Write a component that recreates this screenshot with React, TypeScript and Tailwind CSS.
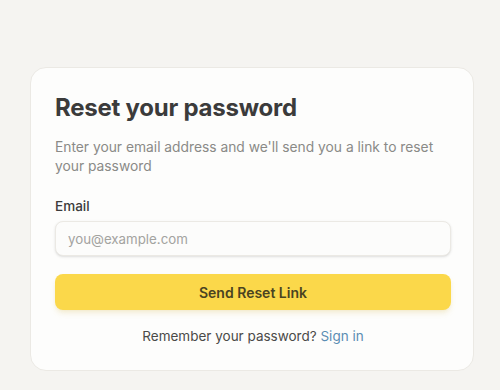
export default function App() {
  return (
    <div className="min-h-screen bg-[#f5f4f1] pl-[30px] pr-[26px] pt-[67px] pb-5 font-['Inter',sans-serif]">
      <div className="rounded-2xl border border-[#ebe9e4] bg-[#fdfdfc] pl-6 pr-[22px] pt-[24px] pb-[24px]">
        <h1 className="text-[24px] font-bold leading-8 tracking-[-0.01em] text-[#3b3b3b]">
          Reset your password
        </h1>
        <p className="mt-[14px] text-[13.8px] leading-[19px] text-[#8a8a87]">
          Enter your email address and we'll send you a link to reset your password
        </p>

        <form className="mt-[20px]" onSubmit={(e) => e.preventDefault()}>
          <label htmlFor="email" className="block text-[13.5px] font-medium leading-5 text-[#3b3b3b]">
            Email
          </label>
          <input
            id="email"
            type="email"
            placeholder="you@example.com"
            className="mt-[5px] h-[35px] w-full rounded-lg border border-[#ebe9e4] bg-[#fcfcfb] px-3 text-[13.3px] text-[#3b3b3b] shadow-sm outline-none placeholder:text-[#a3a3a0]"
          />
          <button
            type="submit"
            className="mt-[18px] h-[36px] w-full rounded-lg bg-[#fbd84a] text-[14px] font-semibold text-[#4a4321] shadow-md shadow-[#e8d9a0]/40"
          >
            Send Reset Link
          </button>
        </form>

        <p className="mt-[16px] text-center text-[13.5px] leading-5 text-[#4a4a48]">
          Remember your password?{' '}
          <a href="#" className="text-[#5b8db3]">
            Sign in
          </a>
        </p>
      </div>
    </div>
  );
}
